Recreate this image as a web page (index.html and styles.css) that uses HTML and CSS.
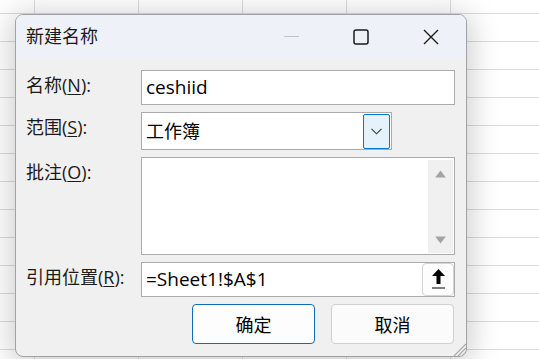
FILE: index.html
```html
<!DOCTYPE html>
<html lang="zh-CN">
<head>
<meta charset="utf-8">
<title>新建名称</title>
<link rel="stylesheet" href="styles.css">
</head>
<body>
<div class="sheet">
  <div class="dialog">
    <div class="titlebar">
      <span class="title">新建名称</span>
      <div class="caption">
        <span class="cap-btn"><svg width="15" height="15" viewBox="0 0 15 15"><line x1="0" y1="7.5" x2="15" y2="7.5" stroke="#c4c4c4" stroke-width="1"/></svg></span>
        <span class="cap-btn"><svg width="16" height="16" viewBox="0 0 16 16"><rect x="1" y="1" width="14" height="14" rx="2" fill="none" stroke="#1b1b1b" stroke-width="1.5"/></svg></span>
        <span class="cap-btn"><svg width="16" height="16" viewBox="0 0 16 16"><path d="M1 1 L15 15 M15 1 L1 15" stroke="#1b1b1b" stroke-width="1.4" fill="none"/></svg></span>
      </div>
    </div>
    <div class="content">
      <div class="row">
        <span class="label">名称(<u>N</u>):</span>
        <div class="field input">ceshiid</div>
      </div>
      <div class="row">
        <span class="label">范围(<u>S</u>):</span>
        <div class="field combo">
          <span class="combo-text">工作簿</span>
          <span class="drop-btn"><svg width="11" height="7" viewBox="0 0 11 7"><polyline points="0.5,0.8 5.5,5.8 10.5,0.8" fill="none" stroke="#3a3a3a" stroke-width="1.1"/></svg></span>
        </div>
      </div>
      <div class="row">
        <span class="label">批注(<u>O</u>):</span>
        <div class="field memo">
          <div class="memo-text"></div>
          <div class="scrollbar">
            <svg width="11" height="8" viewBox="0 0 11 8"><path d="M5.5 0.5 L10.8 7.5 L0.2 7.5 Z" fill="#a3a3a3"/></svg>
            <svg width="11" height="8" viewBox="0 0 11 8"><path d="M0.2 0.5 L10.8 0.5 L5.5 7.5 Z" fill="#a3a3a3"/></svg>
          </div>
        </div>
      </div>
      <div class="row">
        <span class="label">引用位置(<u>R</u>):</span>
        <div class="field input ref">
          <span class="ref-text">=Sheet1!$A$1</span>
          <span class="ref-btn"><svg width="13" height="20" viewBox="0 0 13 20"><path d="M6.5 0 L13 7 L8.5 7 L8.5 15 L4.5 15 L4.5 7 L0 7 Z" fill="#000"/><rect x="0" y="18.5" width="13" height="1" fill="#000"/></svg></span>
        </div>
      </div>
      <div class="actions">
        <button class="btn primary">确定</button>
        <button class="btn">取消</button>
      </div>
    </div>
    <svg class="grip" width="15" height="13" viewBox="0 0 15 13"><path d="M3 13 L15 1 M7 13 L15 5 M11 13 L15 9" stroke="#a8a8a8" stroke-width="1.2" fill="none"/></svg>
  </div>
</div>
</body>
</html>
```
FILE: styles.css
```css
* { box-sizing: border-box; }
html, body { margin: 0; padding: 0; }
body {
  width: 539px;
  height: 359px;
  overflow: hidden;
  font-family: "Open Sans", "Noto Sans CJK SC", sans-serif;
  color: #1a1a1a;
}
.sheet {
  width: 539px;
  height: 359px;
  padding: 14px 0 0 15px;
  background-color: #fff;
  background-image:
    linear-gradient(to right, #dcdcdc 1px, transparent 1px),
    linear-gradient(to bottom, #dcdcdc 1px, transparent 1px);
  background-size: 104px 28px, 104px 28px;
  background-position: 34px 13px, 34px 13px;
}
.dialog {
  position: relative;
  width: 452px;
  height: 343px;
  border: 1px solid #a2a2a2;
  border-radius: 8px;
  background: #f0f0f0;
  box-shadow: 0 4px 30px 4px rgba(0, 0, 0, 0.2);
  display: flex;
  flex-direction: column;
  overflow: hidden;
}
.titlebar {
  height: 43px;
  background: #eef2f8;
  display: flex;
  align-items: center;
  padding-left: 10px;
}
.title {
  font-size: 18px;
  line-height: 22px;
  color: #1a1a1a;
  flex: 1;
  padding-bottom: 1px;
}
.caption {
  display: flex;
  height: 100%;
}
.cap-btn {
  width: 70px;
  height: 100%;
  display: flex;
  align-items: center;
  justify-content: center;
}
.content {
  flex: 1;
  padding: 12px 11px 12px 10px;
  display: flex;
  flex-direction: column;
  gap: 7px;
}
.row {
  display: flex;
  align-items: flex-start;
}
.label {
  width: 115px;
  flex: none;
  font-size: 18px;
  line-height: 22px;
  padding-top: 4px;
  color: #1a1a1a;
}
.label u { text-underline-offset: 2px; }
.field {
  border: 1px solid #ababab;
  background: #fff;
  font-size: 19px;
  color: #000;
}
.input {
  flex: 1;
  height: 35px;
  line-height: 33px;
  padding-left: 4px;
}
.combo {
  width: 251px;
  height: 38px;
  display: flex;
  align-items: center;
  padding: 1px 1px 1px 4px;
  font-size: 18px;
}
.combo-text { flex: 1; line-height: 34px; }
.drop-btn {
  width: 27px;
  height: 35px;
  border: 1px solid #0078d4;
  border-radius: 2px;
  background: #e5f1fb;
  display: flex;
  align-items: center;
  justify-content: center;
}
.memo {
  flex: 1;
  height: 98px;
  display: flex;
  padding: 2px 1px 1px 0;
}
.memo-text { flex: 1; }
.scrollbar {
  width: 25px;
  background: #f0f0f0;
  display: flex;
  flex-direction: column;
  align-items: center;
  justify-content: space-between;
  padding: 10px 0 9px;
}
.ref {
  display: flex;
  align-items: center;
  padding-right: 0;
}
.ref-text { flex: 1; }
.ref-btn {
  width: 32px;
  height: 33px;
  border: 1px solid #d4d4d4;
  border-radius: 4px;
  background: #fdfdfd;
  display: flex;
  justify-content: center;
  align-items: flex-start;
  padding-top: 5px;
}
.actions {
  display: flex;
  justify-content: flex-end;
  gap: 16px;
  padding-right: 1px;
}
.btn {
  width: 123px;
  height: 40px;
  border: 1px solid #d0d0d0;
  border-radius: 4px;
  background: #fbfbfb;
  font-family: "Open Sans", "Noto Sans CJK SC", sans-serif;
  font-size: 18px;
  color: #000;
  padding: 0;
}
.btn.primary {
  border-color: #0f6cbd;
  background: #fdfdfd;
}
.grip {
  position: absolute;
  right: 0;
  bottom: 0;
}
```
